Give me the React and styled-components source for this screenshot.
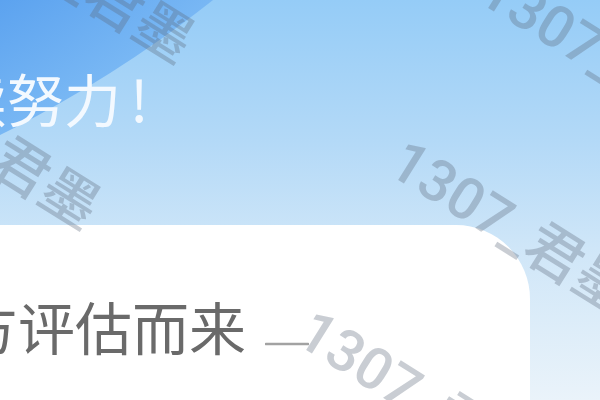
import React from "react";
import styled, { createGlobalStyle } from "styled-components";

const GlobalStyle = createGlobalStyle`
  html, body {
    margin: 0;
    padding: 0;
  }
  body {
    font-family: "Noto Sans CJK SC", "Noto Sans", sans-serif;
  }
`;

const Page = styled.div`
  position: relative;
  width: 600px;
  height: 400px;
  overflow: hidden;
  background: linear-gradient(180deg, #95ccf7 0%, #b3d9f7 35%, #cfe6f8 62%, #eaf3fa 100%);
`;

// big darker blue disc in the top-left corner (decoration behind content)
const Blob = styled.div`
  position: absolute;
  left: -1777px;
  top: -2194px;
  width: 2458px;
  height: 2458px;
  border-radius: 50%;
  background: radial-gradient(circle closest-side, #4490ea 80%, #5ba2ef 90%, #78b7f4 100%);
`;

const Content = styled.div`
  position: relative;
  padding-top: 69px;
`;

const Greeting = styled.div`
  margin-left: -107px;
  font-size: 57px;
  line-height: 57px;
  height: 57px;
  color: #f3f9ff;
  white-space: nowrap;
`;

const Bang = styled.span`
  margin-left: 9px;
`;

const Card = styled.div`
  margin-top: 99px;
  width: 530px;
  height: 200px;
  background: #ffffff;
  border-top-right-radius: 74px;
  padding-top: 72px;
  box-sizing: border-box;
`;

const Row = styled.div`
  display: flex;
  align-items: flex-start;
  gap: 19px;
  margin-left: -96px;
`;

const Desc = styled.span`
  font-size: 57px;
  line-height: 57px;
  color: #6a6a6a;
  white-space: nowrap;
`;

const Arrow = styled.svg`
  width: 44px;
  height: 8px;
  margin-top: 43px;
  flex: none;
`;

const Marks = styled.div`
  position: absolute;
  inset: 0;
  pointer-events: none;
`;

const Mark = styled.span`
  position: absolute;
  left: ${(p) => p.$x}px;
  top: ${(p) => p.$y}px;
  font-family: Roboto, "Noto Sans CJK SC", sans-serif;
  font-weight: 500;
  font-size: 58px;
  line-height: 58px;
  white-space: nowrap;
  color: rgba(92, 104, 120, 0.33);
  transform-origin: 0 50%;
  transform: rotate(32deg);
`;

const marks = [
  { x: 396, y: 126 },
  { x: 304, y: 296 },
  { x: 486, y: -46 },
  { x: -138, y: 40 },
  { x: -44, y: -126 },
];

export default function App() {
  return (
    <>
      <GlobalStyle />
      <Page>
        <Blob />
        <Content>
          <Greeting>
            继续努力<Bang>!</Bang>
          </Greeting>
          <Card>
            <Row>
              <Desc>多方评估而来</Desc>
              <Arrow viewBox="0 0 44 8">
                <line x1="1" y1="4" x2="43" y2="4" stroke="#a2a2a2" strokeWidth="2.6" strokeLinecap="round" />
              </Arrow>
            </Row>
          </Card>
        </Content>
        <Marks>
          {marks.map((m, i) => (
            <Mark key={i} $x={m.x} $y={m.y}>1307_君墨</Mark>
          ))}
        </Marks>
      </Page>
    </>
  );
}
